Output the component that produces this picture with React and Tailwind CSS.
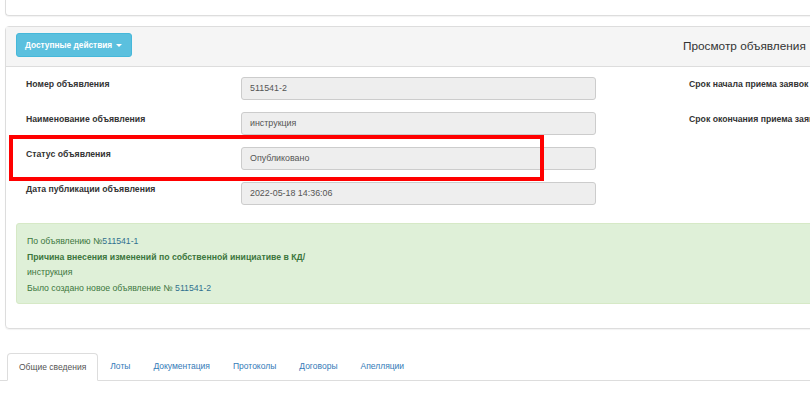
export default function App() {
  const rows = [
    ["Номер объявления", "511541-2", "Срок начала приема заявок"],
    ["Наименование объявления", "инструкция", "Срок окончания приема заявок"],
    ["Статус объявления", "Опубликовано", ""],
    ["Дата публикации объявления", "2022-05-18 14:36:06", ""],
  ];
  const tabs = ["Лоты", "Документация", "Протоколы", "Договоры", "Апелляции"];
  return (
    <div className="relative w-[810px] h-[394px] overflow-hidden bg-white font-['Liberation_Sans',Arial,sans-serif] text-[#333]">
      {/* top panel remnant */}
      <div className="ml-[5px] w-[830px] h-[16px] border-l border-b border-[#ddd] rounded-bl-[4px] shadow-[0_1px_1px_rgba(0,0,0,0.05)]" />

      {/* main panel */}
      <div className="mt-[10px] ml-[5px] w-[830px] border border-[#ddd] rounded-[4px] shadow-[0_1px_1px_rgba(0,0,0,0.05)]">
        <div className="h-[40px] bg-[#f5f5f5] border-b border-[#ddd] flex items-start pl-[10px] pt-[6px]">
          <button className="shrink-0 w-[116px] h-[24px] px-[8px] bg-[#5bc0de] border border-[#46b8da] rounded-[3px] text-white text-[8.3px] font-bold flex items-center gap-[4px]">
            Доступные действия
            <span className="inline-block w-0 h-0 border-l-[3px] border-r-[3px] border-t-[3px] border-l-transparent border-r-transparent border-t-white" />
          </button>
          <div className="shrink-0 ml-[551px] mt-[5px] text-[11.8px] text-[#333] whitespace-nowrap">Просмотр объявления</div>
        </div>

        <div className="px-[10px] pt-[10px] pb-[24px]">
          <div className="flex flex-col gap-[13px] pl-[10px]">
            {rows.map(([label, value, right]) => (
              <div key={label} className="flex items-start h-[22px]">
                <div className="shrink-0 w-[215px] pt-[1px] text-[8.7px] font-bold text-[#333] leading-[12px]">{label}</div>
                <div className="shrink-0 w-[355px] h-[23px] bg-[#eee] border border-[#ccc] rounded-[3px] px-[8px] flex items-center text-[8.9px] text-[#555]">
                  {value}
                </div>
                <div className="shrink-0 ml-[93px] pt-[1px] text-[8.7px] font-bold text-[#333] leading-[12px] whitespace-nowrap">{right}</div>
              </div>
            ))}
          </div>

          <div className="mt-[19px] h-[81px] bg-[#dff0d8] border border-[#d6e9c6] rounded-[3px] pl-[10px] pt-[10px] text-[8.7px] text-[#3c763d] leading-[15.5px]">
            <div>
              По объявлению №<span className="text-[#31708f]">511541-1</span>
            </div>
            <div className="font-bold">Причина внесения изменений по собственной инициативе в КД/</div>
            <div>инструкция</div>
            <div>
              Было создано новое объявление № <span className="text-[#31708f]">511541-2</span>
            </div>
          </div>
        </div>
      </div>

      {/* tabs */}
      <div className="mt-[24px] flex items-end border-b border-[#ddd] pl-[7px] h-[28px]">
        <div className="h-[28px] mb-[-1px] px-[11px] flex items-center bg-white border border-[#ddd] border-b-white rounded-t-[4px] text-[8.5px] text-[#555]">
          Общие сведения
        </div>
        {tabs.map((t) => (
          <div key={t} className="ml-[1px] h-[27px] px-[11px] flex items-center text-[8.5px] text-[#337ab7]">
            {t}
          </div>
        ))}
      </div>

      {/* red highlight overlay */}
      <div className="absolute left-[9px] top-[135px] w-[535px] h-[46px] border-4 border-[#ff0000]" />
    </div>
  );
}
